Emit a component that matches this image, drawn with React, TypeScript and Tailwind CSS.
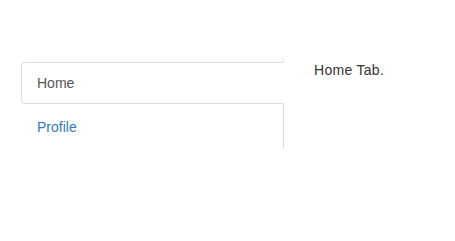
export default function App() {
  return (
    <div
      className="min-h-screen bg-white text-[14px] leading-[20px] text-[#333]"
      style={{ fontFamily: '"Liberation Sans", Arial, sans-serif' }}
    >
      <div className="flex pt-[59px] pl-[21px]">
        <ul className="w-[263px] border-r border-[#ddd] pt-[3px] pb-[1px]">
          <li className="mr-[-1px] mb-[2px]">
            <a className="block rounded-l-[4px] border border-[#ddd] border-r-transparent bg-white px-[15px] py-[10px] text-[#555]">
              Home
            </a>
          </li>
          <li className="mr-[-1px]">
            <a className="block border border-transparent px-[15px] py-[10px] text-[#337ab7]">
              Profile
            </a>
          </li>
        </ul>
        <div className="pl-[30px] pt-[1px]">
          <p className="tracking-[0.3px]">Home Tab.</p>
        </div>
      </div>
    </div>
  );
}
